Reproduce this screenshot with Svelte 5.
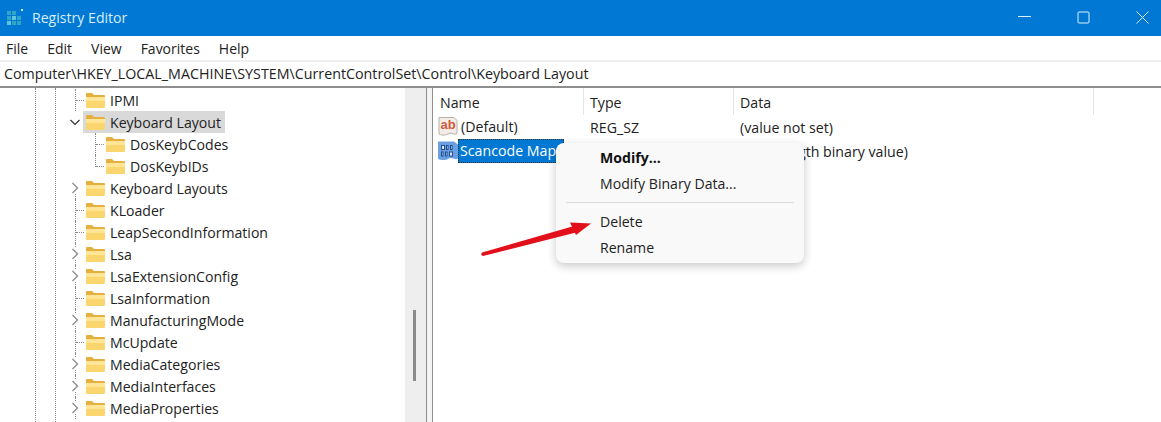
<script>
  const menus = ['File', 'Edit', 'View', 'Favorites', 'Help'];
  const tree = [
    { name: 'IPMI', lvl: 1, tee: true, line: true },
    { name: 'Keyboard Layout', lvl: 1, open: true },
    { name: 'DosKeybCodes', lvl: 2, tee: true },
    { name: 'DosKeybIDs', lvl: 2, tee: true, last: true },
    { name: 'Keyboard Layouts', lvl: 1, arrow: true, lower: true },
    { name: 'KLoader', lvl: 1, tee: true, line: true },
    { name: 'LeapSecondInformation', lvl: 1, tee: true, line: true },
    { name: 'Lsa', lvl: 1, arrow: true, line: true },
    { name: 'LsaExtensionConfig', lvl: 1, arrow: true, line: true },
    { name: 'LsaInformation', lvl: 1, tee: true, line: true },
    { name: 'ManufacturingMode', lvl: 1, arrow: true, line: true },
    { name: 'McUpdate', lvl: 1, tee: true, line: true },
    { name: 'MediaCategories', lvl: 1, arrow: true, line: true },
    { name: 'MediaInterfaces', lvl: 1, arrow: true, line: true },
    { name: 'MediaProperties', lvl: 1, arrow: true, line: true }
  ];
</script>

<div class="win">
  <header class="title">
    <svg class="appicon" width="17" height="17" viewBox="0 0 17 17">
      <g fill="#2fa6c6">
        <rect x="0" y="2" width="4" height="4" /><rect x="5" y="2" width="4" height="4" />
        <rect x="0" y="7" width="4" height="4" /><rect x="5" y="7" width="4" height="4" fill="#62c4d8" />
        <rect x="10" y="7" width="4" height="4" /><rect x="0" y="12" width="4" height="4" fill="#62c4d8" />
        <rect x="5" y="12" width="4" height="4" /><rect x="10" y="12" width="4" height="4" />
      </g>
      <rect x="14" y="0" width="2" height="2" fill="#bfeaf5" />
    </svg>
    <span class="title-text">Registry Editor</span>
    <div class="controls">
      <svg width="13" height="13" viewBox="0 0 13 13"><path d="M0 5.500h13" stroke="#dff1fd" fill="none" /></svg>
      <svg width="13" height="13" viewBox="0 0 13 13"><rect x="1" y="1" width="11" height="11" rx="1" stroke="#dff1fd" fill="none" /></svg>
      <svg width="13" height="13" viewBox="0 0 13 13"><path d="M.5.5l12 12M12.500.5l-12 12" stroke="#dff1fd" fill="none" /></svg>
    </div>
  </header>

  <nav class="menu">
    {#each menus as m}<span>{m}</span>{/each}
  </nav>
  <div class="address">Computer\HKEY_LOCAL_MACHINE\SYSTEM\CurrentControlSet\Control\Keyboard Layout</div>

  <main class="body">
    <section class="tree">
      <i class="guide g1"></i>
      <i class="guide g2"></i>
      <ul>
        {#each tree as t}
          <li class="row lvl{t.lvl}" class:line={t.line} class:lower={t.lower} class:last={t.last}>
            {#if t.tee}<i class="tee"></i>{/if}
            {#if t.arrow}
              <svg class="chev" width="10" height="12" viewBox="0 0 10 12"><path d="M2.500 1l5 5-5 5" fill="none" stroke="#8a8a8a" stroke-width="1.300" /></svg>
            {:else if t.open}
              <svg class="chev" width="10" height="12" viewBox="0 0 10 12"><path d="M0.500 4l4.500 4.500L9.500 4" fill="none" stroke="#333" stroke-width="1.200" /></svg>
            {/if}
            <span class="item" class:sel={t.open}>
              <svg class="folder" width="19" height="15" viewBox="0 0 19 15">
                <path d="M0 1a1 1 0 0 1 1-1h5l2 2h10a1 1 0 0 1 1 1v2H0z" fill="#e6b040" />
                <path d="M0 4h19v10a1 1 0 0 1-1 1H1a1 1 0 0 1-1-1z" fill="#fbd56e" />
                <path d="M0 4h19v4H0z" fill="#ffe596" />
              </svg>
              <span>{t.name}</span>
            </span>
          </li>
        {/each}
      </ul>
    </section>
    <div class="scroll"><b></b></div>
    <div class="split"></div>

    <section class="list">
      <div class="cols">
        <span class="c1">Name</span><span class="c2">Type</span><span class="c3">Data</span>
      </div>
      <div class="vrow">
        <svg class="vicon" width="20" height="20" viewBox="0 0 20 20">
          <path d="M1 .5h15l3 3v13c-3 2-5-1.500-8 0s-6 2.500-10 .5z" fill="#f3ece7" stroke="#b9b0aa" />
          <text x="2.500" y="12" class="ab">ab</text>
        </svg>
        <span class="vname">(Default)</span>
        <span class="vtype">REG_SZ</span>
        <span>(value not set)</span>
      </div>
      <div class="vrow">
        <svg class="vicon" width="20" height="20" viewBox="0 0 20 20">
          <path d="M0 .5h16l4 3v14c-3 2-6-1.500-9 0s-7 2.500-11 .5z" fill="#6a9fe2" />
          <g fill="#dbe9fa" stroke="#1f4d8f" stroke-width="1">
            <rect x="3.500" y="4.500" width="3" height="4" /><rect x="8.500" y="4.500" width="1.500" height="4" /><rect x="12.500" y="4.500" width="1.500" height="4" />
            <rect x="3.500" y="11" width="1.500" height="4" /><rect x="7.500" y="11" width="1.500" height="4" /><rect x="11.500" y="11" width="3" height="4" />
          </g>
        </svg>
        <span class="vname picked">Scancode Map</span>
        <span class="vtype"></span>
        <span>(zero-length binary value)</span>
      </div>
    </section>

    <div class="ctx">
      <div class="ci strong">Modify...</div>
      <div class="ci">Modify Binary Data...</div>
      <hr />
      <div class="ci">Delete</div>
      <div class="ci">Rename</div>
    </div>

    <svg class="arrow" width="112" height="40" viewBox="0 0 112 40">
      <path d="M2 34.500L94 8l2 6.500L3 38a2 2 0 0 1-1-3.500z" fill="#e2101a" />
      <path d="M111 5.500L90 4.500 96 17z" fill="#e2101a" />
    </svg>
  </main>
</div>

<style>
  :global(body) { margin: 0; background: #fff; }
  .win {
    width: 1161px; height: 422px; overflow: hidden;
    font-family: "Open Sans", "Noto Sans", sans-serif;
    font-size: 14px; color: #222; background: #fff;
    display: flex; flex-direction: column;
  }
  .title {
    height: 36px; box-sizing: border-box; padding: 0 0 2px 7px; flex: none; background: #0078d4;
    display: flex; align-items: center; color: #d6eefc;
  }
  .title-text { margin-left: 8px; font-size: 14.1px; }
  .controls { margin-left: auto; display: flex; gap: 46px; padding-right: 12px; }
  .controls svg { display: block; }
  .menu { height: 24px; flex: none; display: flex; gap: 19px; align-items: center; padding-left: 6px; }
  .address {
    height: 24px; flex: none; line-height: 24px; padding-left: 4px; white-space: nowrap; font-size: 14.27px;
    border-top: 2px solid #eeeeee; border-bottom: 2px solid #8e8e8e;
  }
  .body { flex: 1; min-height: 0; display: flex; position: relative; }
  .tree { width: 405px; flex: none; position: relative; overflow: hidden; font-size: 14.1px; }
  .tree ul { list-style: none; margin: 0; padding: 1px 0 0; }
  .guide { position: absolute; top: 0; bottom: 0; border-left: 1px dotted #8a8a8a; }
  .g1 { left: 35px; }
  .g2 { left: 55px; }
  .row { height: 22px; position: relative; display: flex; align-items: center; }
  .lvl1 { padding-left: 83px; }
  .lvl2 { padding-left: 103px; }
  .chev { position: absolute; left: 70px; top: 5px; background: #fff; }
  .tee { position: absolute; top: 11px; width: 8px; border-top: 1px dotted #8a8a8a; }
  .lvl1 .tee { left: 76px; }
  .lvl2 .tee { left: 96px; }
  .line::before {
    content: ""; position: absolute; left: 75px; top: 0; bottom: 0; border-left: 1px dotted #8a8a8a;
  }
  .lower::before {
    content: ""; position: absolute; left: 75px; top: 16px; bottom: 0; border-left: 1px dotted #8a8a8a;
  }
  .lvl2::before {
    content: ""; position: absolute; left: 95px; top: 0; bottom: 0; border-left: 1px dotted #8a8a8a;
  }
  .lvl2.last::before { bottom: 10px; }
  .item { display: flex; align-items: center; gap: 5px; height: 22px; padding: 0 4px 0 3px; white-space: nowrap; }
  .item.sel { background: #d9d9d9; }
  .folder { flex: none; }
  .scroll { width: 21px; flex: none; background: #eeeeee; position: relative; }
  .scroll b { position: absolute; left: 8px; top: 222px; width: 3px; height: 71px; background: #8b8b8b; }
  .split {
    width: 5px; flex: none; background: #f3f3f3;
    border-left: 1px solid #8e8e8e; border-right: 1px solid #8e8e8e;
  }
  .list { flex: 1; min-width: 0; font-size: 14.2px; }
  .cols { height: 27px; display: flex; align-items: flex-start; }
  .cols span { height: 27px; line-height: 29px; padding-left: 6px; box-sizing: border-box; border-right: 1px solid #e4e4e4; }
  .c1 { width: 151px; padding-left: 7px !important; }
  .c2 { width: 150px; }
  .c3 { width: 360px; }
  .vrow { height: 24px; display: flex; align-items: center; white-space: nowrap; position: relative; padding-left: 5px; }
  .vicon { flex: none; }
  .vname { width: 132px; padding-left: 3px; box-sizing: border-box; flex: none; height: 24px; line-height: 24px; }
  .vtype { width: 150px; flex: none; }
  .picked { background: #0078d4; color: #fff; outline: 1px dotted #333; outline-offset: -1px; width: 106px; margin-right: 26px; padding-left: 2px; }
  .ab { font: 700 13px "Liberation Sans", sans-serif; fill: #d4583a; }
  .ctx {
    position: absolute; left: 556px; top: 55px; width: 248px; height: 120px; box-sizing: border-box;
    background: #f9f9f9; border-radius: 8px; padding-top: 2px; font-size: 14.1px;
    box-shadow: 0 3px 10px rgba(0, 0, 0, .22);
  }
  .ci { height: 26px; line-height: 26px; padding-left: 44px; }
  .strong { font-weight: 700; color: #111; }
  .ctx hr { margin: 5px 10px 6px; border: 0; border-top: 1px solid #dcdcdc; }
  .arrow { position: absolute; left: 480px; top: 130px; }
</style>
